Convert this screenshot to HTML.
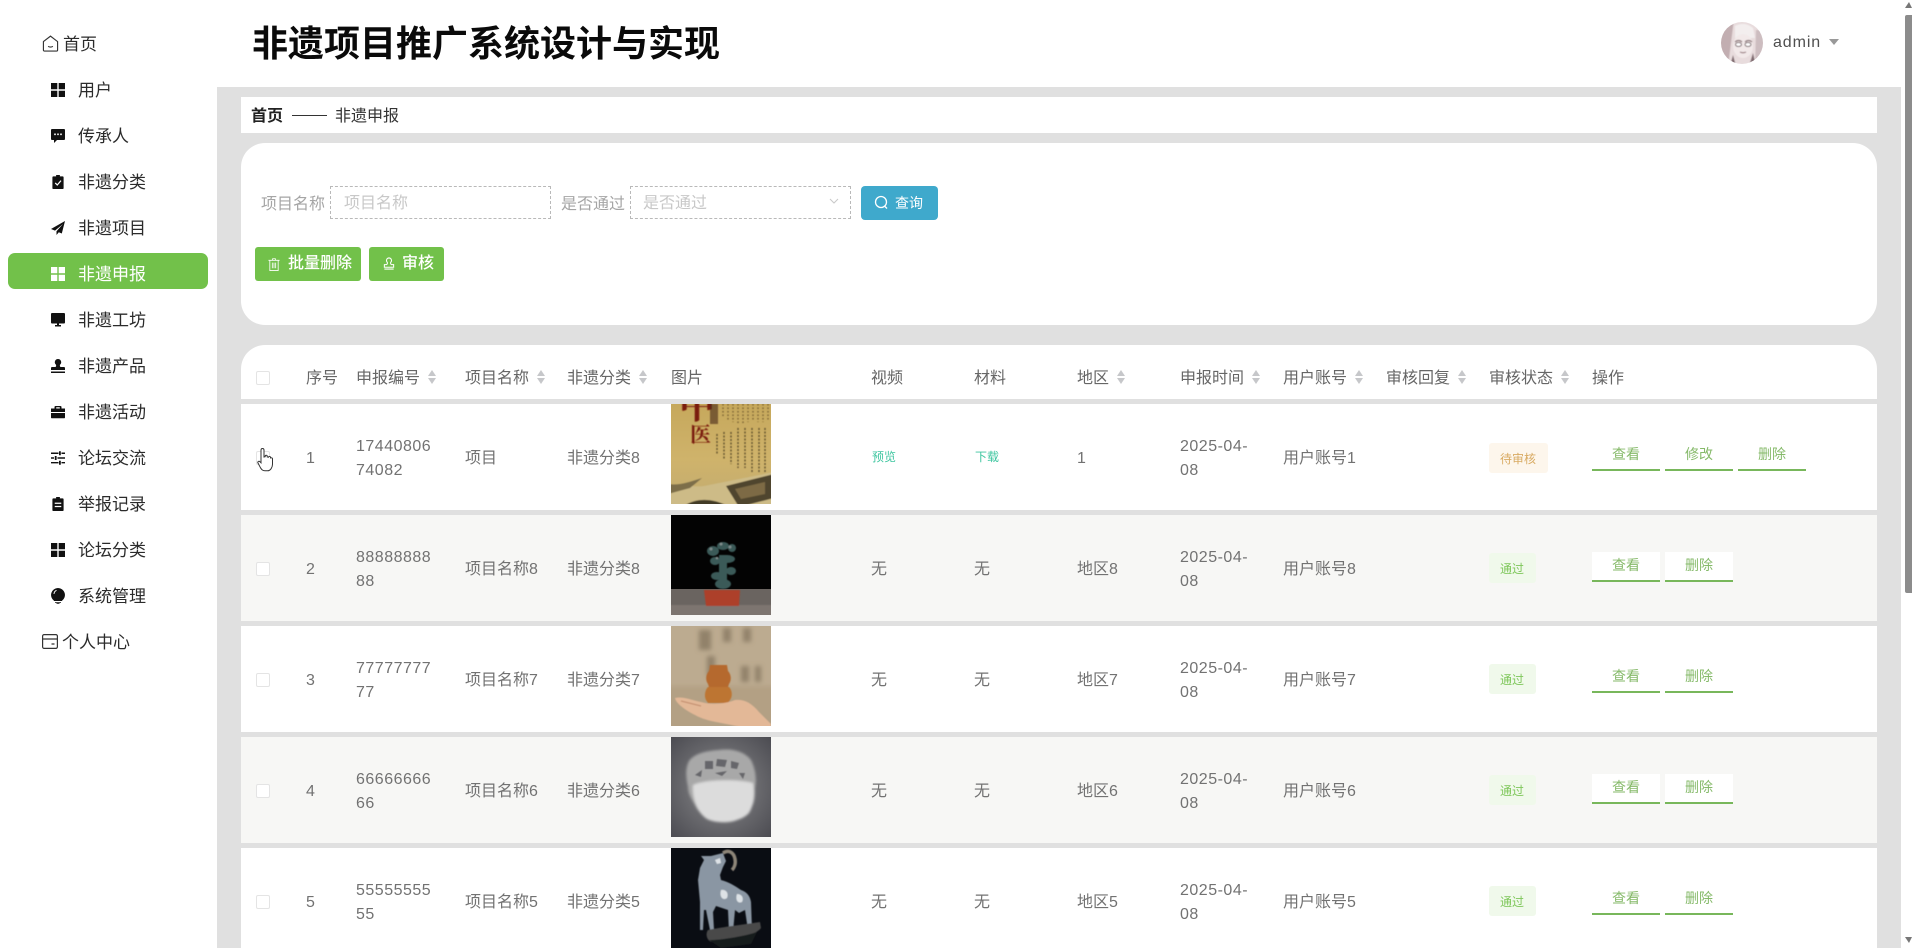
<!DOCTYPE html>
<html lang="zh-CN"><head><meta charset="utf-8"><title>非遗项目推广系统设计与实现</title>
<style>
*{box-sizing:border-box;margin:0;padding:0}
html,body{width:1912px;height:948px;overflow:hidden;background:#fff}
body{position:relative;font-family:"Liberation Sans","Noto Sans CJK SC",sans-serif;font-size:16px;color:#666;filter:blur(.3px)}
div,span,svg{position:absolute}
b,i{font-style:normal}
#main{left:217px;top:87px;width:1684px;height:861px;background:#e0e0e0}
.card{left:241px;width:1636px;background:#fff}
.nav{left:78px;height:46px;line-height:48px;font-size:17px;color:#2b2b2b;white-space:nowrap}
.ic{left:51px;width:14px;height:14px;fill:#111}
.lbl{line-height:38px;color:#a5a5a5;white-space:nowrap}
.ph{line-height:36px;color:#c8c8c8;white-space:nowrap}
.inp{top:186px;height:33px;border:1px dashed #b9b9b9;background:#fff}
.btn{height:34px;border-radius:3px;color:#fff;line-height:33px;white-space:nowrap}
.th{top:0;line-height:68px;color:#666;white-space:nowrap}
.so{width:9px;height:14px;top:25px}
.so::before,.so::after{content:"";position:absolute;left:0;border-left:4.500px solid transparent;border-right:4.500px solid transparent}
.so::before{top:0;border-bottom:6px solid #c6c7ca}
.so::after{bottom:0;border-top:6px solid #c6c7ca}
.row{left:241px;width:1636px;height:106px;background:#fff;overflow:hidden}
.row.e{background:#f7f7f5}
.c{top:0;height:106px;line-height:110px;color:#727272;white-space:nowrap}
.t{top:31px;line-height:24px;color:#727272;white-space:nowrap;letter-spacing:.5px}
.cb{left:15px;top:47px;width:14px;height:14px;border:1px solid #e4e4e4;border-radius:2px;background:#fff}
.pic{left:430px;top:0;width:100px;height:100px}
.lk{top:0;line-height:106px;font-size:12px;color:#3fc6a0}
.tag{left:1248px;top:38px;height:30px;line-height:32px;font-size:12px;text-align:center;border-radius:3px;padding-right:1px}
.op{top:37px;width:68px;height:30px;background:#fff;border-bottom:2px solid #78b75b;color:#86ba6a;font-size:14px;text-align:center;line-height:27px}
</style></head><body>

<!-- sidebar -->
<svg style="left:42px;top:35px;width:17px;height:17px" viewBox="0 0 17 18" fill="none" stroke="#333" stroke-width="1.2"><path d="M1 7 8.500 1.200 16 7V16a1 1 0 0 1-1 1H2a1 1 0 0 1-1-1z"/><path d="M6 12c1.300 1 3.700 1 5 0"/></svg>
<div class="nav" style="left:63px;top:21px">首页</div>

<svg class="ic" style="top:83px" viewBox="0 0 14 14"><path d="M0 0h6.300v6.300H0zM7.700 0H14v6.300H7.700zM0 7.700h6.300V14H0zM7.700 7.700H14V14H7.700z"/></svg>
<div class="nav" style="top:67px">用户</div>

<svg class="ic" style="top:129px" viewBox="0 0 14 14"><path d="M1 0h12a1 1 0 0 1 1 1v9a1 1 0 0 1-1 1H6l-3 3v-3H1a1 1 0 0 1-1-1V1a1 1 0 0 1 1-1z"/><path fill="#fff" d="M3.200 4.500h1.600v1.600H3.200zM6.200 4.500h1.600v1.600H6.200zM9.200 4.500h1.600v1.600H9.200z"/></svg>
<div class="nav" style="top:113px">传承人</div>

<svg class="ic" style="top:175px" viewBox="0 0 14 15"><path d="M5 0h4v1.500h3a1 1 0 0 1 1 1V14a1 1 0 0 1-1 1H2a1 1 0 0 1-1-1V2.500a1 1 0 0 1 1-1h3z"/><path fill="none" stroke="#fff" stroke-width="1.300" d="M4 8.500l2.200 2.200L10.200 6"/></svg>
<div class="nav" style="top:159px">非遗分类</div>

<svg class="ic" style="top:221px" viewBox="0 0 14 14"><path d="M14 0 0 8l4 1.600L12 3 5.500 10.300V14l2.300-2.800 3 1.300z"/></svg>
<div class="nav" style="top:205px">非遗项目</div>

<div style="left:8px;top:253px;width:200px;height:36px;background:#72c14a;border-radius:7px"></div>
<svg class="ic" style="top:267px;fill:#fff" viewBox="0 0 14 14"><path d="M0 0h6.300v6.300H0zM7.700 0H14v6.300H7.700zM0 7.700h6.300V14H0zM7.700 7.700H14V14H7.700z"/></svg>
<div class="nav" style="top:251px;color:#fff">非遗申报</div>

<svg class="ic" style="top:313px" viewBox="0 0 14 14"><path d="M1 0h12a1 1 0 0 1 1 1v8.500a1 1 0 0 1-1 1H1a1 1 0 0 1-1-1V1a1 1 0 0 1 1-1zM4 12h6v1.500H4zM6 10h2v2H6z"/></svg>
<div class="nav" style="top:297px">非遗工坊</div>

<svg class="ic" style="top:359px" viewBox="0 0 14 14"><path d="M7 0a3.200 3.200 0 0 1 2.200 5.500C8.600 6.200 8.800 7.500 9.500 8H13a1 1 0 0 1 1 1v2H0V9a1 1 0 0 1 1-1h3.500c.7-.5.9-1.800.3-2.500A3.200 3.200 0 0 1 7 0zM0 12.500h14V14H0z"/></svg>
<div class="nav" style="top:343px">非遗产品</div>

<svg class="ic" style="top:405px" viewBox="0 0 14 14"><path d="M4.500 1h5a1 1 0 0 1 1 1v1.500H14V7H0V3.500h3.500V2a1 1 0 0 1 1-1zm.7 1.300v1.200h3.600V2.300zM0 8h14v4.500a.8.800 0 0 1-.8.800H.8a.8.800 0 0 1-.8-.8z"/></svg>
<div class="nav" style="top:389px">非遗活动</div>

<svg class="ic" style="top:451px" viewBox="0 0 14 14"><path d="M0 1.500h7.500V3H0zM10.500 1.500H14V3h-3.500zM8 .2h1.800v4H8zM0 6.300h3V7.700H0zM6.500 6.300H14V7.700H6.500zM3.800 5h1.800v4H3.800zM0 11h7.500v1.400H0zM10.500 11H14v1.400h-3.500zM8 9.700h1.800v4H8z"/></svg>
<div class="nav" style="top:435px">论坛交流</div>

<svg class="ic" style="top:497px" viewBox="0 0 14 15"><path d="M5 0h4v1.500h3a1 1 0 0 1 1 1V14a1 1 0 0 1-1 1H2a1 1 0 0 1-1-1V2.500a1 1 0 0 1 1-1h3z"/><path fill="#fff" d="M3.500 6h7v1.300h-7zM3.500 9.500h7v1.300h-7z"/></svg>
<div class="nav" style="top:481px">举报记录</div>

<svg class="ic" style="top:543px" viewBox="0 0 14 14"><path d="M0 0h6.300v6.300H0zM7.700 0H14v6.300H7.700zM0 7.700h6.300V14H0zM7.700 7.700H14V14H7.700z"/></svg>
<div class="nav" style="top:527px">论坛分类</div>

<svg class="ic" style="top:588px;height:16px" viewBox="0 0 14 16"><path d="M7 0a7 7 0 0 1 4 12.700V13H3v-.3A7 7 0 0 1 7 0zM4 14h6v.8H4zM5.500 15.200h3v.8h-3z"/><path d="M3 6c0-2 1-3 2.500-3.700" stroke="#fff" fill="none" stroke-width=".9"/></svg>
<div class="nav" style="top:573px">系统管理</div>

<svg style="left:42px;top:634px;width:16px;height:15px" viewBox="0 0 16 15" fill="none" stroke="#333" stroke-width="1.200"><rect x=".6" y=".6" width="14.800" height="13.800" rx="1.500"/><path d="M.6 5h14.800M9.500 10h3"/></svg>
<div class="nav" style="left:62px;top:619px">个人中心</div>

<!-- header -->
<div style="left:252px;top:18px;font-size:36px;font-weight:700;color:#0a0a0a;line-height:52px;white-space:nowrap">非遗项目推广系统设计与实现</div>
<svg style="left:1721px;top:22px;width:42px;height:42px" viewBox="0 0 42 42"><defs><clipPath id="av"><circle cx="21" cy="21" r="21"/></clipPath><filter id="bl"><feGaussianBlur stdDeviation=".6"/></filter><filter id="b2"><feGaussianBlur stdDeviation="2.500"/></filter><filter id="b3"><feGaussianBlur stdDeviation="1.200"/></filter></defs><g clip-path="url(#av)"><g filter="url(#bl)"><rect x="-3" y="-3" width="48" height="48" fill="#e8dcdd"/><path d="M-3-3h16L7 45H-3z" fill="#c2aeb1"/><path d="M35 8l10 0v37H34z" fill="#cdbdc0"/><path d="M14 4c6-3 12-3 18 2l2 10-20 0z" fill="#f3eeee"/><ellipse cx="22" cy="24" rx="10" ry="12" fill="#f2e9e9"/><path d="M14 20c2-2 5-2 7 0M24 20c2-2 5-2 7 0" stroke="#8a7478" stroke-width="1.200" fill="none"/><ellipse cx="17.500" cy="22.500" rx="3" ry="2" fill="#fff" stroke="#7d6a6e"/><ellipse cx="27" cy="22.500" rx="3" ry="2" fill="#fff" stroke="#7d6a6e"/><path d="M19 30c2 1 4 1 6 0" stroke="#9c7f84" stroke-width="1.200" fill="none"/><path d="M12 33l3 11h-6zM32 31l3 13h-7z" fill="#7f6b70"/></g></g></svg>
<div style="left:1773px;top:31px;line-height:24px;color:#4f4f4f;letter-spacing:.9px">admin</div>
<div style="left:1829px;top:39px;border-left:5px solid transparent;border-right:5px solid transparent;border-top:6px solid #999"></div>

<!-- scrollbar -->
<div style="left:1905px;top:15px;width:7px;height:578px;background:#8c8c8c;border-radius:2px 0 0 2px"></div>
<div style="left:1905px;top:2px;border-left:4px solid transparent;border-right:3px solid transparent;border-bottom:6px solid #777"></div>
<div style="left:1905px;top:937px;border-left:4px solid transparent;border-right:3px solid transparent;border-top:6px solid #777"></div>

<div id="main"></div>

<!-- breadcrumb -->
<div class="card" style="top:97px;height:36px"></div>
<div style="left:251px;top:98px;line-height:38px;font-weight:700;color:#222">首页</div>
<div style="left:292px;top:115px;width:35px;height:1px;background:#333"></div>
<div style="left:335px;top:98px;line-height:38px;color:#333">非遗申报</div>

<!-- search card -->
<div class="card" style="top:143px;height:182px;border-radius:24px"></div>
<div class="lbl" style="left:261px;top:186px">项目名称</div>
<div class="inp" style="left:330px;width:221px"></div>
<div class="ph" style="left:344px;top:186px">项目名称</div>
<div class="lbl" style="left:561px;top:186px">是否通过</div>
<div class="inp" style="left:630px;width:221px"></div>
<div class="ph" style="left:643px;top:186px">是否通过</div>
<svg style="left:829px;top:198px;width:10px;height:7px" viewBox="0 0 10 7" fill="none" stroke="#c9c9c9" stroke-width="1.100"><path d="M1 1l4 4 4-4"/></svg>
<div class="btn" style="left:861px;top:186px;width:77px;background:#3fa9cc;border-radius:4px"></div>
<svg style="left:874px;top:195px;width:15px;height:15px" viewBox="0 0 15 15" fill="none" stroke="#fff" stroke-width="1.300"><circle cx="7" cy="7" r="5.500"/><path d="M10.500 11l2.500 2.500"/></svg>
<div style="left:895px;top:186px;line-height:34px;font-size:14px;color:#fff">查询</div>

<div class="btn" style="left:255px;top:247px;width:106px;background:#72c14a"></div>
<svg style="left:268px;top:258px;width:12px;height:13px" viewBox="0 0 12 14" fill="none" stroke="#fff" stroke-width=".9"><path d="M0 2.500h12M4.500 2.500V.8h3v1.700M1.500 2.500V13.500h9V2.500M4.200 5v6M6 5v6M7.800 5v6"/></svg>
<div style="left:288px;top:248px;line-height:32px;color:#fff;font-weight:500">批量删除</div>
<div class="btn" style="left:369px;top:247px;width:75px;background:#72c14a"></div>
<svg style="left:383px;top:257px;width:12px;height:13px" viewBox="0 0 12 14" fill="none" stroke="#fff" stroke-width="1.100"><path d="M6 1a2.700 2.700 0 0 1 2 4.500c-.6.8-.3 2 .5 2.700h2.500v2.800H1V8.200h2.500c.8-.7 1.100-1.900.5-2.700A2.700 2.700 0 0 1 6 1zM1 13h10"/></svg>
<div style="left:402px;top:248px;line-height:32px;color:#fff;font-weight:500">审核</div>

<!-- table header -->
<div class="card" style="top:345px;height:54px;border-radius:24px 24px 0 0"></div>
<div style="left:241px;top:345px;width:1636px;height:66px;overflow:hidden">
  <div style="left:15px;top:26px;width:14px;height:14px;border:1px solid #e4e4e4;border-radius:2px"></div>
  <div class="th" style="left:65px">序号</div>
  <div class="th" style="left:115px">申报编号</div><div class="so" style="left:187px"></div>
  <div class="th" style="left:224px">项目名称</div><div class="so" style="left:296px"></div>
  <div class="th" style="left:326px">非遗分类</div><div class="so" style="left:398px"></div>
  <div class="th" style="left:430px">图片</div>
  <div class="th" style="left:630px">视频</div>
  <div class="th" style="left:733px">材料</div>
  <div class="th" style="left:836px">地区</div><div class="so" style="left:876px"></div>
  <div class="th" style="left:939px">申报时间</div><div class="so" style="left:1011px"></div>
  <div class="th" style="left:1042px">用户账号</div><div class="so" style="left:1114px"></div>
  <div class="th" style="left:1145px">审核回复</div><div class="so" style="left:1217px"></div>
  <div class="th" style="left:1248px">审核状态</div><div class="so" style="left:1320px"></div>
  <div class="th" style="left:1351px">操作</div>
</div>

<!-- row 1 -->
<div class="row" style="top:404px">
  <div class="cb"></div><div class="c" style="left:65px">1</div>
  <div class="t" style="left:115px">17440806<br>74082</div>
  <div class="c" style="left:224px">项目</div><div class="c" style="left:326px">非遗分类8</div>
  <svg class="pic" viewBox="0 0 100 100"><defs><linearGradient id="g1" x1="0" y1="0" x2="0" y2="1"><stop offset="0" stop-color="#c6a85c"/><stop offset=".55" stop-color="#cfb36b"/><stop offset="1" stop-color="#c2ab70"/></linearGradient></defs><rect width="100" height="100" fill="url(#g1)"/><g filter="url(#bl)"><text x="8" y="14" font-size="36" font-weight="700" fill="#7a1c10" font-family="Noto Serif CJK SC,serif">中</text><text x="19" y="38" font-size="21" font-weight="700" fill="#7a1c10" font-family="Noto Serif CJK SC,serif">医</text><path d="M39 0h8v20h-8z" fill="#4f3018" opacity=".65"/><g stroke="#5a4520" stroke-width="1.300" stroke-dasharray="1.500 2" opacity=".75"><path d="M52 0v14M57 0v17M62 0v18M67 0v20M72 0v19M77 0v18M82 0v17M87 0v18M92 0v18M97 0v16"/></g><g stroke="#3f2f18" stroke-width="1.300" stroke-dasharray="2 1.500" opacity=".8"><path d="M46 30v20M53 28v28M60 28v32M67 24v40M74 24v40M81 24v44M88 24v44M94 24v44"/></g><path d="M-3 82c14-4 22 2 36 0 20-4 40-8 70-14v36H-3z" fill="#cdbb87"/><path d="M55 82l48-12v24l-35 9z" fill="#50452e"/><path d="M64 85l30-7 0 12-24 5z" fill="#7d6b45"/><path d="M12 103c10-9 30-10 46 0z" fill="#433a28"/><path d="M-3 80c10 2 22-2 34-6l-12 10L-3 90z" fill="#7d6e4a"/></g></svg>
  <div class="lk" style="left:631px">预览</div><div class="lk" style="left:734px">下载</div>
  <div class="c" style="left:836px">1</div>
  <div class="t" style="left:939px">2025-04-<br>08</div>
  <div class="c" style="left:1042px">用户账号1</div>
  <div class="tag" style="top:39px;width:59px;background:#fdf6ec;color:#d9ab63">待审核</div>
  <div class="op" style="left:1351px">查看</div><div class="op" style="left:1424px">修改</div><div class="op" style="left:1497px">删除</div>
</div>

<!-- row 2 -->
<div class="row e" style="top:515px">
  <div class="cb"></div><div class="c" style="left:65px">2</div>
  <div class="t" style="left:115px">88888888<br>88</div>
  <div class="c" style="left:224px">项目名称8</div><div class="c" style="left:326px">非遗分类8</div>
  <svg class="pic" viewBox="0 0 100 100"><rect width="100" height="100" fill="#030303"/><rect y="74" width="100" height="26" fill="#6a6460"/><g filter="url(#bl)"><rect x="-4" y="90" width="108" height="14" fill="#7d7570"/><path d="M33 75h36l-1 16H35z" fill="#ad4029"/><g fill="#3a5a58"><ellipse cx="42" cy="36" rx="6" ry="5"/><ellipse cx="52" cy="31" rx="6" ry="4"/><ellipse cx="61" cy="33" rx="4" ry="4"/><ellipse cx="44" cy="46" rx="5" ry="4"/><ellipse cx="56" cy="44" rx="8" ry="4"/><ellipse cx="60" cy="56" rx="5" ry="4"/><ellipse cx="46" cy="61" rx="6" ry="4"/><ellipse cx="52" cy="69" rx="8" ry="5"/><path d="M48 40h8v30h-8z"/></g><g fill="#7f8c8c"><circle cx="40" cy="34" r="1.500"/><circle cx="50" cy="29" r="1.500"/><circle cx="59" cy="32" r="1.500"/><circle cx="46" cy="43" r="1.300"/></g></g></svg>
  <div class="c" style="left:630px">无</div><div class="c" style="left:733px">无</div><div class="c" style="left:836px">地区8</div>
  <div class="t" style="left:939px">2025-04-<br>08</div>
  <div class="c" style="left:1042px">用户账号8</div>
  <div class="tag" style="width:47px;background:#f0f9eb;color:#7ec75a">通过</div>
  <div class="op" style="left:1351px">查看</div><div class="op" style="left:1424px">删除</div>
</div>

<!-- row 3 -->
<div class="row" style="top:626px">
  <div class="cb"></div><div class="c" style="left:65px">3</div>
  <div class="t" style="left:115px">77777777<br>77</div>
  <div class="c" style="left:224px">项目名称7</div><div class="c" style="left:326px">非遗分类7</div>
  <svg class="pic" viewBox="0 0 100 100"><rect width="100" height="100" fill="#bcab90"/><g filter="url(#b2)"><path d="M28 4h12v20H28zM52 2h8v14h-8zM72 2h8v14h-8zM36 30h8v20h-8zM70 40h8v16h-8zM84 40h6v16h-6z" fill="#7f705a" opacity=".7"/><rect x="-5" y="60" width="110" height="45" fill="#b3a084"/></g><g filter="url(#bl)"><path d="M39 39h17l1 6c3 3 4 9 1 13l-1 3H38l-1-3c-3-4-2-10 1-13z" fill="#b5692f"/><path d="M37 61h21c3 3 4 9 1 13l-2 3H37l-2-3c-2-4-1-10 2-13z" fill="#bd7430"/><path d="M4 72c8-2 16 2 26 4 10 3 24 2 34-2 8-1 16 2 24 12l12 12v5H76c-18-6-38-6-52-14-8-4-19-11-20-17z" fill="#e3b897"/><path d="M10 75l20 5" stroke="#c08a6a" stroke-width="1"/></g></svg>
  <div class="c" style="left:630px">无</div><div class="c" style="left:733px">无</div><div class="c" style="left:836px">地区7</div>
  <div class="t" style="left:939px">2025-04-<br>08</div>
  <div class="c" style="left:1042px">用户账号7</div>
  <div class="tag" style="width:47px;background:#f0f9eb;color:#7ec75a">通过</div>
  <div class="op" style="left:1351px">查看</div><div class="op" style="left:1424px">删除</div>
</div>

<!-- row 4 -->
<div class="row e" style="top:737px">
  <div class="cb"></div><div class="c" style="left:65px">4</div>
  <div class="t" style="left:115px">66666666<br>66</div>
  <div class="c" style="left:224px">项目名称6</div><div class="c" style="left:326px">非遗分类6</div>
  <svg class="pic" viewBox="0 0 100 100"><defs><radialGradient id="g4" cx=".5" cy=".5" r=".7"><stop offset="0" stop-color="#8a8a8c"/><stop offset="1" stop-color="#4c4c52"/></radialGradient></defs><rect width="100" height="100" fill="url(#g4)"/><g filter="url(#b3)"><path d="M18 24c6-8 18-10 30-11 14-2 26 2 32 10 4 8 6 18 4 28 0 8 0 14-4 20-3 6-10 6-14 12-6 3-16 3-22 1-10-1-14-8-18-12-4-8-9-14-9-22-2-10-3-18 1-26z" fill="#a8a8a8"/><path d="M22 48c12-6 46-6 60-2 2 10 1 22-4 30-8 9-30 12-42 6-10-6-15-22-14-34z" fill="#dcdcdc"/></g><g filter="url(#bl)" fill="#57575b" opacity=".8"><path d="M34 24h8v8h-8zM46 22l10 1-2 7-9-1zM60 24l8 2-2 6-6-1zM24 38l7-5-1 7zM44 36l12-2-5 5zM68 36l6 0-2 6z"/></g></svg>
  <div class="c" style="left:630px">无</div><div class="c" style="left:733px">无</div><div class="c" style="left:836px">地区6</div>
  <div class="t" style="left:939px">2025-04-<br>08</div>
  <div class="c" style="left:1042px">用户账号6</div>
  <div class="tag" style="width:47px;background:#f0f9eb;color:#7ec75a">通过</div>
  <div class="op" style="left:1351px">查看</div><div class="op" style="left:1424px">删除</div>
</div>

<!-- row 5 -->
<div class="row" style="top:848px;height:100px">
  <div class="cb"></div><div class="c" style="left:65px">5</div>
  <div class="t" style="left:115px">55555555<br>55</div>
  <div class="c" style="left:224px">项目名称5</div><div class="c" style="left:326px">非遗分类5</div>
  <svg class="pic" viewBox="0 0 100 100"><rect width="100" height="100" fill="#0a0d13"/><g filter="url(#bl)"><path d="M52 5c6-4 11 0 12 6 1 5-1 9-3 11" stroke="#8d8578" stroke-width="3.500" fill="none"/><path d="M40 8l12-3 3 8-3 6-3 8 1 5c8 2 14 6 20 10 6 2 9 6 10 12l1 28-4 0-3-20-6 3-4-3-2 22-4 0-1-22-12-4-3 6 1 18-4 0-4-20-2 0-1 20-3 0 0-28-2-22 2-12 4-8-3-4z" fill="#8a96a3"/><path d="M50 42c5-1 8 3 6 8-4 3-8-1-6-8zM66 46c5 0 7 4 5 8-4 2-7-2-5-8zM44 12l5-2 1 5-4 1z" fill="#dde2e6"/><path d="M37 82c14-3 40-6 52-8l1 6c-6 8-30 14-48 14-6 0-8-8-5-12z" fill="#4a4a4a"/><path d="M38 92c14 0 36-4 48-8l-6 12-30 4z" fill="#191b1f"/></g></svg>
  <div class="c" style="left:630px">无</div><div class="c" style="left:733px">无</div><div class="c" style="left:836px">地区5</div>
  <div class="t" style="left:939px">2025-04-<br>08</div>
  <div class="c" style="left:1042px">用户账号5</div>
  <div class="tag" style="width:47px;background:#f0f9eb;color:#7ec75a">通过</div>
  <div class="op" style="left:1351px">查看</div><div class="op" style="left:1424px">删除</div>
</div>

<!-- cursor -->
<svg style="left:257px;top:447px;width:18px;height:25px" viewBox="0 0 18 25" fill="#fff" stroke="#333" stroke-width="1"><path d="M5.500 1.500c1 0 1.500.7 1.500 1.700V10l1.200-.3V9c0-1 2-1 2 0v1l1.300.2c0-1 2-1 2 .2v1c.1-.9 2-.8 2 .4v5.500c0 3-2 6.500-5 6.500H8c-2.500 0-3.500-1.500-4.500-3L1 16c-.7-1.300.8-2.300 2-1.200l1 1V3.200c0-1 .5-1.700 1.500-1.700z"/></svg>
</body></html>
